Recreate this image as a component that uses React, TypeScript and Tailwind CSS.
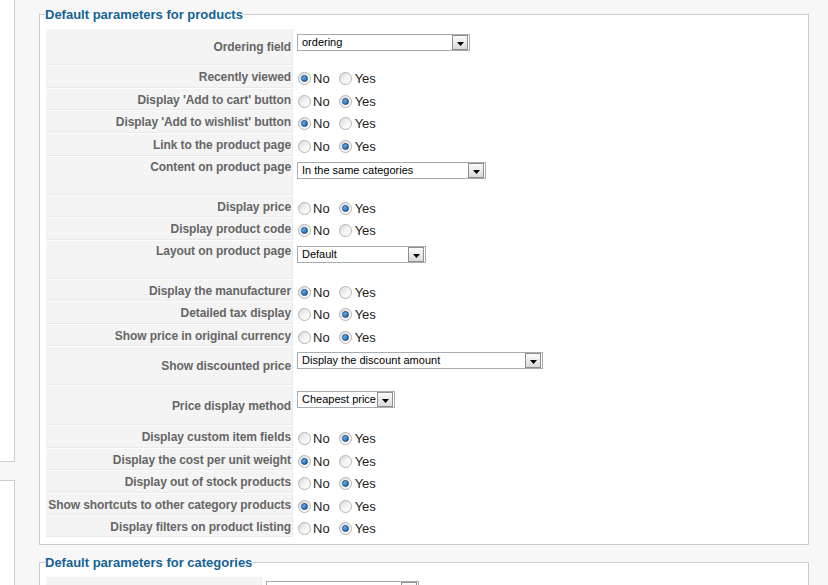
import React from 'react';

type Row = {
  label: string;
  h: string;
  top?: boolean;
  radio?: 'no' | 'yes';
  select?: { w: string; text: string };
};

const rows: Row[] = [
  { label: 'Ordering field', h: 'h-[35px]', select: { w: 'w-[173px]', text: 'ordering' } },
  { label: 'Recently viewed', h: 'h-[21px]', radio: 'no' },
  { label: "Display 'Add to cart' button", h: 'h-[20px]', radio: 'yes' },
  { label: "Display 'Add to wishlist' button", h: 'h-[21px]', radio: 'no' },
  { label: 'Link to the product page', h: 'h-[21px]', radio: 'yes' },
  { label: 'Content on product page', h: 'h-[37px]', top: true, select: { w: 'w-[189px]', text: 'In the same categories' } },
  { label: 'Display price', h: 'h-[20px]', radio: 'yes' },
  { label: 'Display product code', h: 'h-[21px]', radio: 'no' },
  { label: 'Layout on product page', h: 'h-[37px]', top: true, select: { w: 'w-[129px]', text: 'Default' } },
  { label: 'Display the manufacturer', h: 'h-[20px]', radio: 'no' },
  { label: 'Detailed tax display', h: 'h-[21px]', radio: 'yes' },
  { label: 'Show price in original currency', h: 'h-[20px]', radio: 'yes' },
  { label: 'Show discounted price', h: 'h-[37px]', select: { w: 'w-[246px]', text: 'Display the discount amount' } },
  { label: 'Price display method', h: 'h-[38px]', select: { w: 'w-[98px]', text: 'Cheapest price' } },
  { label: 'Display custom item fields', h: 'h-[21px]', radio: 'yes' },
  { label: 'Display the cost per unit weight', h: 'h-[20px]', radio: 'no' },
  { label: 'Display out of stock products', h: 'h-[21px]', radio: 'yes' },
  { label: 'Show shortcuts to other category products', h: 'h-[20px]', radio: 'no' },
  { label: 'Display filters on product listing', h: 'h-[20px]', radio: 'yes' },
];

const Radio = ({ on, className }: { on: boolean; className: string }) => (
  <span
    className={`inline-flex h-[13px] w-[13px] shrink-0 items-center justify-center rounded-full border border-[#b3b3b3] bg-gradient-to-br from-[#d6d6d6] via-[#f3f3f3] to-white ${className}`}
  >
    {on && (
      <span className="h-[7px] w-[7px] rounded-full border border-[#0d4478] bg-gradient-to-br from-[#7cc0f0] to-[#1261a8]" />
    )}
  </span>
);

const YesNo = ({ value }: { value: 'no' | 'yes' }) => (
  <div className="flex items-center text-[13px] leading-[15px] text-[#222]">
    <Radio on={value === 'no'} className="ml-[1px]" />
    <span className="ml-[2px]">No</span>
    <Radio on={value === 'yes'} className="ml-[9px]" />
    <span className="ml-[3px]">Yes</span>
  </div>
);

const Select = ({ w, text }: { w: string; text: string }) => (
  <div className={`flex h-[17px] items-center border border-[#a5acb2] bg-white ${w}`}>
    <span className="flex-1 overflow-hidden whitespace-nowrap pl-[4px] text-[11px] leading-[13px] text-black">{text}</span>
    <span className="mr-px flex h-[15px] w-[16px] shrink-0 items-center justify-center border border-[#8f8f8f] bg-gradient-to-b from-[#fbfbfb] to-[#dadada]">
      <svg width="7" height="4" viewBox="0 0 7 4" className="mt-[2px]">
        <path d="M0 0h7L3.5 4z" fill="#000" />
      </svg>
    </span>
  </div>
);

const Fieldset = ({
  title,
  keyWidth,
  className,
  children,
}: {
  title: string;
  keyWidth: string;
  className: string;
  children: (kw: string) => React.ReactNode;
}) => (
  <fieldset className={`border border-[#cccccc] bg-white px-[5px] pt-[6px] pb-[6px] ${className}`}>
    <legend className="text-[13px] font-bold leading-[15px] text-[#146295]">{title}</legend>
    <table className="w-full table-fixed border-separate border-spacing-[1px]">
      <tbody>{children(keyWidth)}</tbody>
    </table>
  </fieldset>
);

export default function App() {
  return (
    <div className="flex h-[585px] overflow-hidden bg-[#f7f7f7] font-['Liberation_Sans',Arial,sans-serif]">
      <div className="flex w-[15px] shrink-0 flex-col">
        <div className="h-[462px] border-r border-b border-[#cccccc] bg-white" />
        <div className="mt-[18px] flex-1 border-t border-r border-[#cccccc] bg-white" />
      </div>

      <div className="ml-[24px] w-[770px] shrink-0">
        <Fieldset title="Default parameters for products" keyWidth="w-[247px]" className="mt-[7px]">
          {(kw) =>
            rows.map((r) => (
              <tr key={r.label}>
                <td className={`${kw} border-r border-b border-[#e9e9e9] bg-[#f4f4f4] p-0`}>
                  <div
                    className={`flex justify-end whitespace-nowrap pr-[1px] text-[12px] font-bold leading-[14px] tracking-[-0.08px] text-[#666] ${r.h} ${
                      r.top ? 'items-start pt-[3px]' : 'items-center pt-px'
                    }`}
                  >
                    {r.label}
                  </div>
                </td>
                <td className="pt-[5px] pl-[3px] align-top">
                  {r.radio && <YesNo value={r.radio} />}
                  {r.select && <Select w={r.select.w} text={r.select.text} />}
                </td>
              </tr>
            ))
          }
        </Fieldset>

        <Fieldset title="Default parameters for categories" keyWidth="w-[216px]" className="mt-[10px]">
          {(kw) => (
            <tr>
              <td className={`${kw} border-r border-b border-[#e9e9e9] bg-[#f4f4f4] p-0`}>
                <div className="h-[37px]" />
              </td>
              <td className="pt-[4px] pl-[3px] align-top">
                <Select w="w-[153px]" text="" />
              </td>
            </tr>
          )}
        </Fieldset>
      </div>
    </div>
  );
}
